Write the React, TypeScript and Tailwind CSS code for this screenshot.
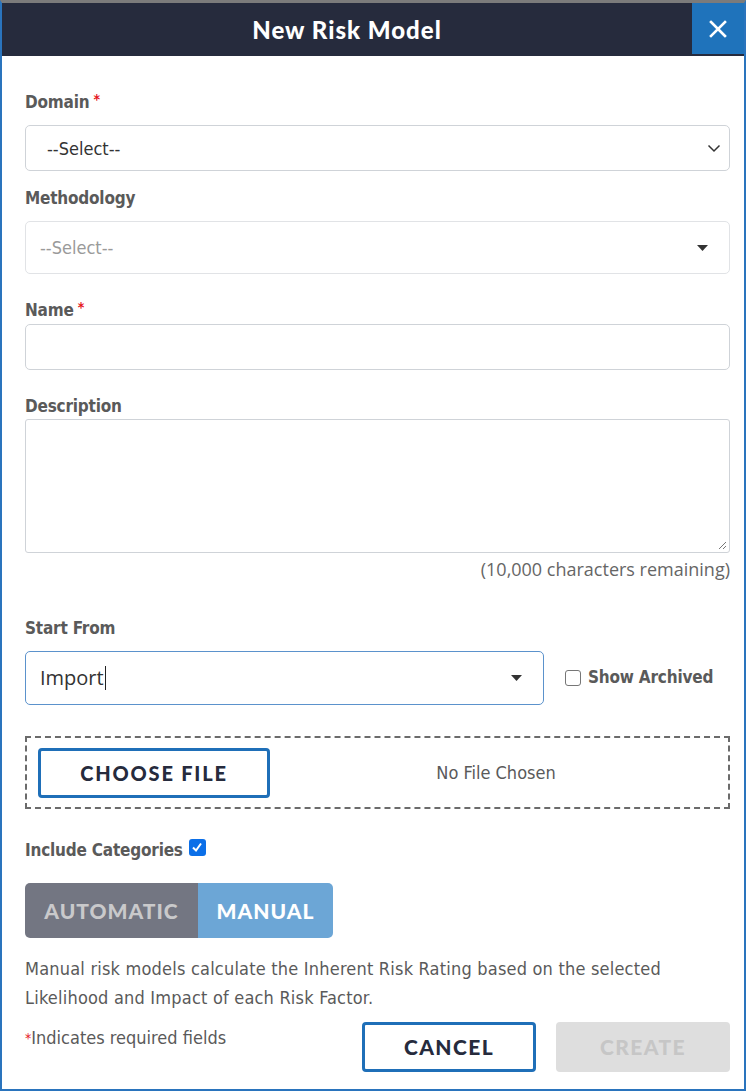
import React from 'react'

const narrow = { fontFamily: '"Liberation Sans Narrow", "DejaVu Sans Condensed", Roboto, sans-serif' }
const geo = { fontFamily: 'Lato, "Open Sans", sans-serif' }
const ui = { fontFamily: '"Open Sans", "Noto Sans", sans-serif' }

function Label({ text, required }: { text: string; required?: boolean }) {
  return (
    <div className="h-6 pt-[4px] flex items-center text-[17px] font-bold text-[#5a5a5a] tracking-[-0.2px]" style={narrow}>
      {text}
      {required && <span className="text-[#e5141b] text-[14px] ml-1 -mt-2">*</span>}
    </div>
  )
}

function Caret() {
  return (
    <svg width="11" height="6" viewBox="0 0 11 6">
      <path d="M0 0 L11 0 L5.5 6 Z" fill="#333" />
    </svg>
  )
}

export default function App() {
  return (
    <div className="w-[746px] h-[1091px] bg-white border-t-[3px] border-t-[#7b7b7b] border-x-2 border-b-2 border-x-[#2a74bd] border-b-[#2a74bd] flex flex-col">
      {/* header */}
      <div className="h-[53px] bg-[#262b3d] flex items-start">
        <div className="flex-1 h-full flex items-center justify-center">
          <span className="text-white text-[24px] font-black tracking-[1px]" style={geo}>New Risk Model</span>
        </div>
        <button className="w-[52px] h-[51px] bg-[#1f73bb] flex items-center justify-center">
          <svg width="18" height="18" viewBox="0 0 18 18">
            <path d="M2 2 L16 16 M16 2 L2 16" stroke="white" strokeWidth="2.6" strokeLinecap="square" />
          </svg>
        </button>
      </div>

      <div className="pl-[23px] pr-[14px] flex flex-col">
        <div className="mt-[33px]"><Label text="Domain" required /></div>
        <div className="mt-[12px] h-[46px] border border-[#cfd3d8] rounded-[5px] flex items-center justify-between pl-[21px] pr-[8px]">
          <span className="text-[18px] text-[#333]" style={narrow}>--Select--</span>
          <svg width="14" height="9" viewBox="0 0 14 9">
            <path d="M1.5 1.5 L7 7 L12.5 1.5" stroke="#333" strokeWidth="1.5" fill="none" />
          </svg>
        </div>

        <div className="mt-[14px]"><Label text="Methodology" /></div>
        <div className="mt-[12px] h-[53px] border border-[#e1e3e6] rounded-[5px] flex items-center justify-between pl-[14px] pr-[21px]">
          <span className="text-[18px] text-[#9a9a9a]" style={narrow}>--Select--</span>
          <Caret />
        </div>

        <div className="mt-[23px]"><Label text="Name" required /></div>
        <div className="mt-[3px] h-[46px] border border-[#cfd3d8] rounded-[5px]" />

        <div className="mt-[23px]"><Label text="Description" /></div>
        <div className="mt-[2px] h-[134px] border border-[#cfd3d8] rounded-[3px] relative">
          <svg className="absolute right-[2px] bottom-[2px]" width="10" height="10" viewBox="0 0 10 10">
            <path d="M9 2 L2 9 M9 6 L6 9" stroke="#777" strokeWidth="1" />
          </svg>
        </div>
        <div className="mt-[3px] text-right text-[18px] text-[#666] leading-[26px]" style={ui}>
          (10,000 characters remaining)
        </div>

        <div className="mt-[33px]"><Label text="Start From" /></div>
        <div className="mt-[12px] flex items-center">
          <div className="w-[519px] h-[54px] border border-[#5b92cc] rounded-[5px] flex items-center justify-between pl-[14px] pr-[21px]">
            <span className="text-[20px] text-[#333] flex items-center" style={ui}>
              Import<span className="w-px h-[24px] bg-[#222] ml-px" />
            </span>
            <Caret />
          </div>
          <label className="ml-[21px] flex items-center gap-[7px]">
            <span className="w-[16px] h-[16px] border border-[#767676] rounded-[3px] bg-white" />
            <span className="text-[17px] font-bold text-[#5a5a5a] tracking-[-0.2px]" style={narrow}>Show Archived</span>
          </label>
        </div>

        <div className="mt-[31px] h-[73px] border-2 border-dashed border-[#6b6b6b] flex items-center pl-[11px]">
          <button className="w-[232px] h-[50px] border-[3px] border-[#1f6fb8] rounded-[4px] text-[20px] font-black text-[#262b3d] tracking-[1.8px]" style={geo}>
            CHOOSE FILE
          </button>
          <div className="flex-1 text-center text-[18px] text-[#5a5a5a] pr-[6px]" style={narrow}>No File Chosen</div>
        </div>

        <div className="mt-[28px] flex items-center gap-[6px]">
          <Label text="Include Categories" />
          <span className="w-[17px] h-[17px] rounded-[3px] bg-[#0b6fe8] flex items-center justify-center -mt-[4px]">
            <svg width="12" height="12" viewBox="0 0 12 12">
              <path d="M2 6.5 L5 9.5 L10 2.5" stroke="white" strokeWidth="2" fill="none" />
            </svg>
          </span>
        </div>

        <div className="mt-[22px] flex w-[308px] h-[55px] rounded-[5px] overflow-hidden text-[21px] font-black tracking-[1px]" style={geo}>
          <div className="w-[173px] bg-[#737682] text-[#c9c9cb] flex items-center justify-center">AUTOMATIC</div>
          <div className="flex-1 bg-[#6ca6d6] text-white flex items-center justify-center">MANUAL</div>
        </div>

        <p className="mt-[16px] text-[18px] leading-[29px] text-[#5a5a5a] tracking-[0.2px]" style={narrow}>
          Manual risk models calculate the Inherent Risk Rating based on the selected
          <br />
          Likelihood and Impact of each Risk Factor.
        </p>

        <div className="mt-[10px] flex items-start">
          <div className="flex-1 pt-[3px] text-[18px] leading-[26px] text-[#5a5a5a]" style={narrow}>
            <span className="text-[#e5141b] text-[14px] align-top">*</span>Indicates required fields
          </div>
          <button className="w-[174px] h-[50px] border-[3px] border-[#1f6fb8] rounded-[4px] text-[21px] font-black text-[#262b3d] tracking-[1.4px]" style={geo}>
            CANCEL
          </button>
          <button className="ml-[20px] w-[174px] h-[50px] bg-[#dedede] rounded-[4px] text-[21px] font-black text-[#c6c6c6] tracking-[1.4px]" style={geo}>
            CREATE
          </button>
        </div>
      </div>
    </div>
  )
}
